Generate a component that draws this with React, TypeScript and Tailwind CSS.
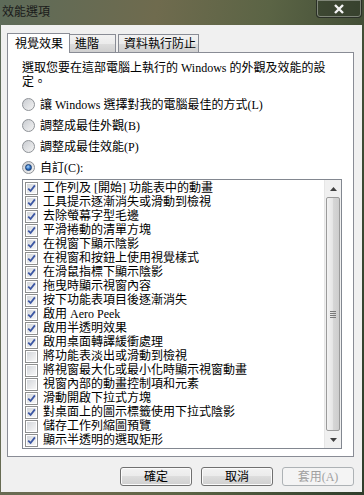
import React from "react";

const FONT = "font-['Liberation_Serif','Noto_Sans_CJK_TC',serif]";

const items: [string, boolean][] = [
  ["工作列及 [開始] 功能表中的動畫", true],
  ["工具提示逐漸消失或滑動到檢視", true],
  ["去除螢幕字型毛邊", true],
  ["平滑捲動的清單方塊", true],
  ["在視窗下顯示陰影", true],
  ["在視窗和按鈕上使用視覺樣式", true],
  ["在滑鼠指標下顯示陰影", true],
  ["拖曳時顯示視窗內容", true],
  ["按下功能表項目後逐漸消失", true],
  ["啟用 Aero Peek", true],
  ["啟用半透明效果", true],
  ["啟用桌面轉譯緩衝處理", true],
  ["將功能表淡出或滑動到檢視", false],
  ["將視窗最大化或最小化時顯示視窗動畫", false],
  ["視窗內部的動畫控制項和元素", false],
  ["滑動開啟下拉式方塊", true],
  ["對桌面上的圖示標籤使用下拉式陰影", true],
  ["儲存工作列縮圖預覽", false],
  ["顯示半透明的選取矩形", true],
];

function Radio({ label, checked }: { label: string; checked?: boolean }) {
  return (
    <div className="flex items-center h-[21px]">
      <div className="w-[13px] h-[13px] rounded-full border border-[#8e9297] bg-[linear-gradient(135deg,#c9ccd1,#f4f4f4)] flex items-center justify-center">
        {checked && (
          <div className="w-[7px] h-[7px] rounded-full bg-[radial-gradient(circle_at_40%_35%,#a8d6ff,#2a6cc0_55%,#0d3a78)] border border-[#1b3f73]" />
        )}
      </div>
      <span className="ml-[5px] leading-[14px]">{label}</span>
    </div>
  );
}

function Check({ label, checked }: { label: string; checked: boolean }) {
  return (
    <div className="flex items-center h-[14px]">
      <div className="w-[13px] h-[13px] border border-[#8e8f8f] bg-white p-[1px] shrink-0">
        <div className="w-full h-full bg-[linear-gradient(135deg,#d3d6db,#f7f7f7)] relative">
          {checked && (
            <svg viewBox="0 0 9 9" className="absolute inset-0 w-[9px] h-[9px]">
              <path d="M1.2 4.6 L3.6 7 L7.9 1.4" fill="none" stroke="#3c57a3" strokeWidth="1.8" />
            </svg>
          )}
        </div>
      </div>
      <span className="ml-[5px] leading-[14px] whitespace-nowrap">{label}</span>
    </div>
  );
}

function Btn({ label, disabled }: { label: string; disabled?: boolean }) {
  return (
    <div
      className={
        disabled
          ? "w-[72px] h-[19px] rounded-[3px] border border-[#adb2b5] bg-[#f4f4f4] flex items-center justify-center text-[#a0a0a0]"
          : "w-[72px] h-[19px] rounded-[3px] border border-[#707070] bg-[linear-gradient(#f2f2f2,#ebebeb_50%,#dddddd_50%,#cfcfcf)] flex items-center justify-center shadow-[inset_0_0_0_1px_#fbfbfb]"
      }
    >
      <span className="leading-[14px]">{label}</span>
    </div>
  );
}

export default function App() {
  return (
    <div
      className={`w-[364px] h-[495px] overflow-hidden flex flex-col text-[12px] text-black bg-[linear-gradient(100deg,#5d6b59,#6f6b4e_35%,#5b6445_60%,#2f3d2b)] ${FONT}`}
    >
      <div className="h-[25px] shrink-0 relative">
        <span className="absolute left-[2px] top-[5px] text-[12px] leading-[14px] text-[#1a1a1a]">效能選項</span>
        <div className="absolute right-[2px] top-0 w-[46px] h-[18px] rounded-b-[4px] border border-t-0 border-[#2a2f27] shadow-[inset_0_0_0_1px_rgba(255,255,255,0.35)] bg-[rgba(40,48,36,0.45)] flex items-center justify-center">
          <svg viewBox="0 0 12 10" className="w-[12px] h-[10px]">
            <path d="M2 1 L10 9 M10 1 L2 9" stroke="#f4f4f4" strokeWidth="2.4" />
          </svg>
        </div>
      </div>

      <div className="ml-[1px] w-[361px] h-[467px] bg-[#f0f0f0] flex flex-col">
        <div className="flex items-end h-[27px] pl-[6px]">
          <div className="w-[63px] h-[20px] bg-white border border-b-0 border-[#898c95] flex items-center pl-[7px] relative top-[1px] z-10">
            <span className="leading-[14px]">視覺效果</span>
          </div>
          <div className="w-[46px] h-[18px] border border-b-0 border-l-0 border-[#898c95] bg-[linear-gradient(#f2f2f2,#ebebeb_50%,#dddddd_50%,#cfcfcf)] flex items-center pl-[5px]">
            <span className="leading-[14px]">進階</span>
          </div>
          <div className="w-[81px] h-[18px] ml-[2px] border border-b-0 border-[#898c95] bg-[linear-gradient(#f2f2f2,#ebebeb_50%,#dddddd_50%,#cfcfcf)] flex items-center pl-[5px]">
            <span className="leading-[14px]">資料執行防止</span>
          </div>
        </div>

        <div className="ml-[6px] w-[347px] h-[405px] bg-white border border-[#898c95] pl-[14px] pr-[11px] pt-[8px]">
          <p className="leading-[14px] w-[315px]">選取您要在這部電腦上執行的 Windows 的外觀及效能的設定。</p>
          <div className="mt-[5px] flex flex-col">
            <Radio label="讓 Windows 選擇對我的電腦最佳的方式(L)" />
            <Radio label="調整成最佳外觀(B)" />
            <Radio label="調整成最佳效能(P)" />
            <Radio label="自訂(C):" checked />
          </div>
          <div className="mt-[1px] h-[270px] border border-[#828790] flex">
            <div className="flex-1 pl-[2px] pt-[1px] overflow-hidden">
              {items.map(([t, c]) => (
                <Check key={t} label={t} checked={c} />
              ))}
            </div>
            <div className="w-[17px] bg-[#f0f0f0] border-l border-[#e6e6e6] flex flex-col">
              <div className="h-[17px] flex items-center justify-center">
                <svg viewBox="0 0 7 4" className="w-[7px] h-[4px]">
                  <path d="M0 4 L3.5 0 L7 4 Z" fill="#404040" />
                </svg>
              </div>
              <div className="flex-1 mx-[1px] rounded-[2px] border border-[#9a9a9a] bg-[linear-gradient(90deg,#f3f3f3,#e4e4e4_50%,#d6d6d6_50%,#cdcdcd)] flex items-center justify-center">
                <div className="flex flex-col gap-[1px]">
                  <div className="w-[6px] h-[1px] bg-[#7a7a7a]" />
                  <div className="w-[6px] h-[1px] bg-[#7a7a7a]" />
                  <div className="w-[6px] h-[1px] bg-[#7a7a7a]" />
                  <div className="w-[6px] h-[1px] bg-[#7a7a7a]" />
                </div>
              </div>
              <div className="h-[17px] flex items-center justify-center">
                <svg viewBox="0 0 7 4" className="w-[7px] h-[4px]">
                  <path d="M0 0 L3.5 4 L7 0 Z" fill="#404040" />
                </svg>
              </div>
            </div>
          </div>
        </div>

        <div className="flex gap-[9px] pl-[119px] mt-[10px]">
          <Btn label="確定" />
          <Btn label="取消" />
          <Btn label="套用(A)" disabled />
        </div>
      </div>
    </div>
  );
}
